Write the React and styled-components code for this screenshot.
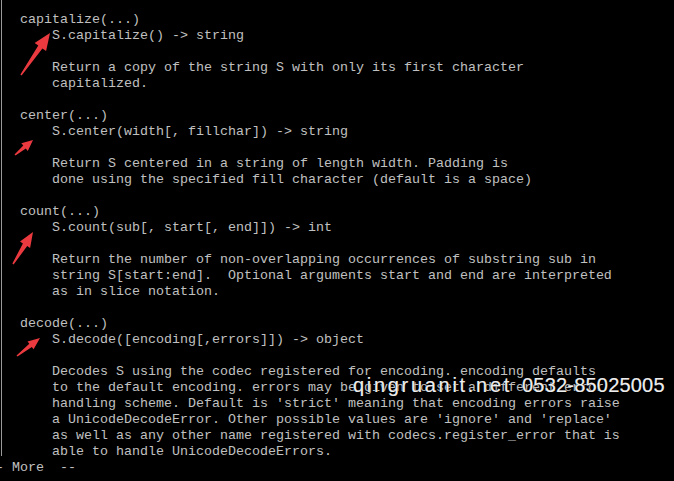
import React from "react";
import styled, { createGlobalStyle } from "styled-components";

const Global = createGlobalStyle`
  html, body { margin: 0; padding: 0; background: #000; }
  body { width: 674px; height: 481px; overflow: hidden; }
`;

const Screen = styled.div`
  position: relative;
  width: 674px;
  height: 481px;
  background: #000;
  color: #c0c0c0;
  font-family: "Liberation Mono", "DejaVu Sans Mono", monospace;
  font-size: 13.333px;
  line-height: 16px;
  overflow: hidden;
`;

const Frame = styled.div`
  position: relative;
  display: flex;
  flex-direction: column;
  gap: 16px;
  padding: 12px 0 0 20px;

  &::before {
    content: "";
    position: absolute;
    left: 1px;
    top: 0;
    bottom: 4px;
    width: 1px;
    background: #9a9a9a;
  }
`;

const Entry = styled.section`
  display: flex;
  flex-direction: column;
`;

const Line = styled.div`
  white-space: pre;
  height: 16px;
`;

const Indented = styled.div`
  display: flex;
  flex-direction: column;
  gap: 16px;
  padding-left: 32px;
`;

const Paragraph = styled.div`
  display: flex;
  flex-direction: column;
`;

const Pager = styled.div`
  white-space: pre;
  height: 16px;
  margin-left: -12px;
`;

const Watermark = styled.div`
  position: absolute;
  left: 353px;
  top: 375px;
  display: flex;
  gap: 10px;
  font-family: "Liberation Sans", Arial, sans-serif;
  font-size: 20px;
  line-height: 20px;
  color: #ededed;
  white-space: pre;
  text-shadow: 0 0 1px #000, 0 0 0.4px #fff;
`;

const WmPart = styled.span`
  letter-spacing: ${(p) => p.$spacing}px;
`;

const Overlay = styled.svg`
  position: absolute;
  left: 0;
  top: 0;
  pointer-events: none;
`;

const entries = [
  {
    name: "capitalize(...)",
    sig: "S.capitalize() -> string",
    desc: [
      "Return a copy of the string S with only its first character",
      "capitalized.",
    ],
  },
  {
    name: "center(...)",
    sig: "S.center(width[, fillchar]) -> string",
    desc: [
      "Return S centered in a string of length width. Padding is",
      "done using the specified fill character (default is a space)",
    ],
  },
  {
    name: "count(...)",
    sig: "S.count(sub[, start[, end]]) -> int",
    desc: [
      "Return the number of non-overlapping occurrences of substring sub in",
      "string S[start:end].  Optional arguments start and end are interpreted",
      "as in slice notation.",
    ],
  },
  {
    name: "decode(...)",
    sig: "S.decode([encoding[,errors]]) -> object",
    desc: [
      "Decodes S using the codec registered for encoding. encoding defaults",
      "to the default encoding. errors may be given to set a different error",
      "handling scheme. Default is 'strict' meaning that encoding errors raise",
      "a UnicodeDecodeError. Other possible values are 'ignore' and 'replace'",
      "as well as any other name registered with codecs.register_error that is",
      "able to handle UnicodeDecodeErrors.",
    ],
  },
];

function arrowPoints(tx, ty, hx, hy, headLen, headW, tailW, neckW) {
  const dx = hx - tx;
  const dy = hy - ty;
  const len = Math.hypot(dx, dy);
  const ux = dx / len;
  const uy = dy / len;
  const px = -uy;
  const py = ux;
  const bx = hx - ux * headLen;
  const by = hy - uy * headLen;
  const pts = [
    [tx + px * tailW / 2, ty + py * tailW / 2],
    [bx + px * neckW / 2, by + py * neckW / 2],
    [bx + px * headW / 2, by + py * headW / 2],
    [hx, hy],
    [bx - px * headW / 2, by - py * headW / 2],
    [bx - px * neckW / 2, by - py * neckW / 2],
    [tx - px * tailW / 2, ty - py * tailW / 2],
  ];
  return pts.map((p) => p[0].toFixed(1) + "," + p[1].toFixed(1)).join(" ");
}

const arrows = [
  { t: [21, 75], h: [50, 33], hl: 17, hw: 14, tw: 1.5, nw: 5 },
  { t: [15, 155], h: [33, 140], hl: 11, hw: 10, tw: 1.5, nw: 4 },
  { t: [13, 264], h: [33, 232], hl: 15, hw: 12, tw: 1.5, nw: 5 },
  { t: [17, 356], h: [40, 338], hl: 12, hw: 10, tw: 1.5, nw: 4 },
];

export default function App() {
  return (
    <>
      <Global />
      <Screen>
        <Frame>
          {entries.map((e) => (
            <Entry key={e.name}>
              <Line>{e.name}</Line>
              <Indented>
                <Line>{e.sig}</Line>
                <Paragraph>
                  {e.desc.map((d, i) => (
                    <Line key={i}>{d}</Line>
                  ))}
                </Paragraph>
              </Indented>
            </Entry>
          ))}
        </Frame>
        <Pager>{"-- More  --"}</Pager>
        <Watermark>
          <WmPart $spacing={2.7}>qingruanit.net</WmPart>
          <WmPart $spacing={0.2}>0532-85025005</WmPart>
        </Watermark>
        <Overlay width="674" height="481" viewBox="0 0 674 481">
          {arrows.map((a, i) => (
            <polygon
              key={i}
              points={arrowPoints(a.t[0], a.t[1], a.h[0], a.h[1], a.hl, a.hw, a.tw, a.nw)}
              fill="#ea3a3f"
            />
          ))}
        </Overlay>
      </Screen>
    </>
  );
}
